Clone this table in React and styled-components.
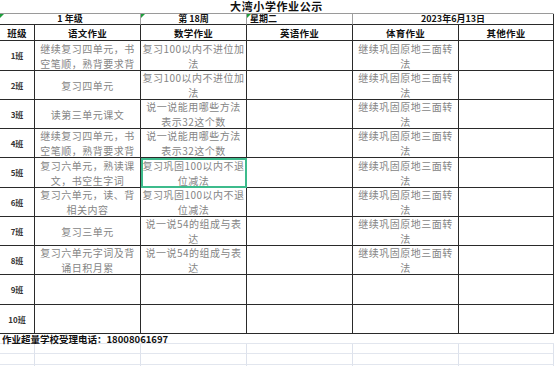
import React from 'react'
import styled, { createGlobalStyle } from 'styled-components'

const GlobalStyle = createGlobalStyle`
  html, body {
    margin: 0;
    padding: 0;
    background: #fff;
  }
  body {
    font-family: "Noto Sans CJK SC", "Liberation Sans", sans-serif;
    overflow: hidden;
  }
`

const COLS = '35px 106px 106px 106px 106px 95px'
const DATA_HEIGHTS = [30, 29, 29, 29, 30, 29, 29, 29, 30, 29]

const Sheet = styled.div`
  display: grid;
  grid-template-columns: ${COLS};
  grid-template-rows: 14px 11px 16px ${DATA_HEIGHTS.map(h => h + 'px').join(' ')} 10px 10px 11px 10px;
  width: 554px;
  height: 366px;
  overflow: hidden;
`

const Cell = styled.div`
  box-sizing: border-box;
  position: relative;
  grid-column: span ${p => p.$span || 1};
  display: flex;
  flex-direction: column;
  align-items: ${p => (p.$left ? 'flex-start' : 'center')};
  justify-content: center;
  padding-left: ${p => (p.$left ? '3px' : '0')};
  border-right: 1px solid ${p => p.$vline || '#2a2a2a'};
  border-bottom: 1px solid ${p => p.$hline || '#2a2a2a'};
  white-space: nowrap;
  overflow: ${p => (p.$visible ? 'visible' : 'hidden')};
  ${p => p.$selected && `
    outline: 2px solid #3dbb8c;
    outline-offset: -2px;
    z-index: 2;
  `}
`

const Marker = styled.span`
  position: absolute;
  left: 0;
  top: 0;
  width: 0;
  height: 0;
  border-top: 4px solid #1e9e3c;
  border-right: 4px solid transparent;
`

const Title = styled(Cell)`
  grid-column: 1 / -1;
  justify-content: flex-end;
  padding-bottom: 1px;
  font-size: 11px;
  line-height: 12px;
  font-weight: 700;
  color: #111;
  letter-spacing: 0.6px;
`

const HeadText = styled.span`
  font-size: 9px;
  font-weight: 700;
  color: #111;
  line-height: 10px;
`

const ColHead = styled.span`
  font-size: 9.5px;
  font-weight: 700;
  color: #111;
  letter-spacing: 0.3px;
  line-height: 14px;
`

const ClassLabel = styled.span`
  font-size: 8px;
  font-weight: 700;
  color: #333;
`

const Line = styled.span`
  font-size: 10px;
  line-height: 15px;
  letter-spacing: 0.5px;
  color: #858585;
`

const Footer = styled(Cell)`
  grid-column: 1 / -1;
  align-items: flex-start;
  padding-left: 2px;
  font-size: 9.5px;
  line-height: 10px;
  font-weight: 700;
  color: #111;
  border-right: none;
  border-bottom: 1px solid #e2e6ee;
  overflow: visible;
`

const Grid = styled(Cell)`
  border-right: 1px solid #dde2ec;
  border-bottom: 1px solid #e2e6ee;
`

const PE = ['继续巩固原地三面转', '法']

const rows = [
  { label: '1班', cn: ['继续复习四单元，书', '空笔顺，熟背要求背'], math: ['复习100以内不进位加', '法'], pe: PE },
  { label: '2班', cn: ['复习四单元'], math: ['复习100以内不进位加', '法'], pe: PE },
  { label: '3班', cn: ['读第三单元课文'], math: ['说一说能用哪些方法', '表示32这个数'], pe: PE },
  { label: '4班', cn: ['继续复习四单元，书', '空笔顺，熟背要求背'], math: ['说一说能用哪些方法', '表示32这个数'], pe: PE },
  { label: '5班', cn: ['复习六单元，熟读课', '文，书空生字词'], math: ['复习巩固100以内不退', '位减法'], pe: PE, selected: true },
  { label: '6班', cn: ['复习六单元，读、背', '相关内容'], math: ['复习巩固100以内不退', '位减法'], pe: PE },
  { label: '7班', cn: ['复习三单元'], math: ['说一说54的组成与表', '达'], pe: PE },
  { label: '8班', cn: ['复习六单元字词及背', '诵日积月累'], math: ['说一说54的组成与表', '达'], pe: PE },
  { label: '9班', cn: [], math: [], pe: [] },
  { label: '10班', cn: [], math: [], pe: [] },
]

const Lines = ({ items }) => items.map((t, i) => <Line key={i}>{t}</Line>)

const App = () => (
  <>
    <GlobalStyle />
    <Sheet>
      <Title $hline="#9a9a9a" $vline="transparent">大湾小学作业公示</Title>

      <Cell $span={2} $vline="#a0a0a0" $visible>
        <Marker />
        <HeadText>1 年级</HeadText>
      </Cell>
      <Cell $vline="#a0a0a0" $visible>
        <Marker />
        <HeadText>第 18周</HeadText>
      </Cell>
      <Cell $left $vline="#a0a0a0" $visible>
        <Marker />
        <HeadText>星期二</HeadText>
      </Cell>
      <Cell $span={2} $visible>
        <HeadText>2023年6月13日</HeadText>
      </Cell>

      {['班级', '语文作业', '数学作业', '英语作业', '体育作业', '其他作业'].map(h => (
        <Cell key={h}>
          <ColHead>{h}</ColHead>
        </Cell>
      ))}

      {rows.map(r => (
        <React.Fragment key={r.label}>
          <Cell>
            <ClassLabel>{r.label}</ClassLabel>
          </Cell>
          <Cell>
            <Lines items={r.cn} />
          </Cell>
          <Cell $selected={r.selected}>
            <Lines items={r.math} />
          </Cell>
          <Cell />
          <Cell>
            <Lines items={r.pe} />
          </Cell>
          <Cell />
        </React.Fragment>
      ))}

      <Footer>作业超量学校受理电话：18008061697</Footer>

      {[0, 1, 2].map(k =>
        [0, 1, 2, 3, 4, 5].map(c => <Grid key={k + '-' + c} />)
      )}
    </Sheet>
  </>
)

export default App
